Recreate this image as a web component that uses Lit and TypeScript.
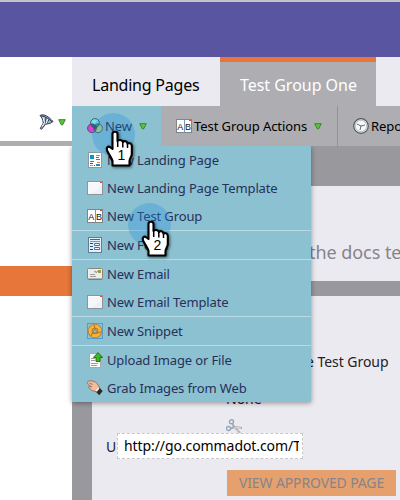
import { LitElement, html, css, svg } from "lit";
import { customElement } from "lit/decorators.js";

const icons: Record<string, unknown> = {
  page: svg`<rect x="1.5" y=".5" width="13" height="15" fill="#fff" stroke="#8b98a5"/><path d="M3 3h4v4H3z" fill="#168fc4"/><path d="M9 3.5h4M10 10.5h3M3 13.5h3" stroke="#d88a20"/><path d="M9 5.5h3M3 9.5h4" stroke="#4a8a3c"/><path d="M3 11.5h3M7 13.5h1" stroke="#555"/><path d="M9 7h4v1H9zM9 12h4v2H9z" fill="#2389bd"/>`,
  template: svg`<rect x=".5" y="1.5" width="15" height="13" fill="#f5f7fa" stroke="#8e9499"/><path d="M1 2.5h14" stroke="#fff"/><path d="M4 14 15 6v8z" fill="#edf1f5"/><path d="M13 2h2v1h-2z" fill="#e8472b"/>`,
  ab: svg`<rect x=".5" y="1.5" width="15" height="13" fill="#fff" stroke="#7d868d"/><path d="M8.500 2v12" stroke="#7a9bb8"/><path d="M13 2h2v1h-2z" fill="#e8472b"/><text x="1.3" y="11.5" font-size="9" fill="#111">A</text><text x="9.1" y="11.5" font-size="9" fill="#111">B</text>`,
  form: svg`<rect x="1.5" y=".5" width="13" height="15" fill="#e3f0fa" stroke="#5f7d96"/><path d="M3 2.500h10" stroke="#2b6cab"/><path d="M3 4.500h10" stroke="#6b9cc8"/><path d="M3 6.500h3M3 9.500h3M3 12.500h3" stroke="#3c4650"/><path d="M7.500 6.500h5v2h-5zM7.500 10.500h5v2h-5z" fill="#fff" stroke="#2c76bb"/>`,
  email: svg`<rect x=".5" y="2.500" width="15" height="11" rx="1" fill="#ededeb" stroke="#858883"/><path d="M1 13h14" stroke="#777"/><path d="M11 4h3v3h-3z" fill="#a59a3c"/><path d="m7 6 2-1v2l2-2M3 8.500h5M3 10.500h6" stroke="#888" fill="none" stroke-width=".8"/>`,
  snippet: svg`<rect x=".5" y=".5" width="15" height="15" fill="none" stroke="#2378b5" stroke-dasharray="1 1"/><circle cx="8" cy="8" r="4.800" fill="none" stroke="#b96c13" stroke-width="4.600"/><circle cx="8" cy="8" r="4.900" fill="none" stroke="#f7b23a" stroke-width="3.200"/><path d="M8 5.500 10.500 9.800h-5z" fill="#8bc1d0" stroke="#b96c13" stroke-width=".8"/><path d="m8 5.500-1-3.500M10.500 9.800l4-1M5.500 9.800 4 13" stroke="#b96c13"/>`,
  upload: svg`<path d="M2.500 1.500h8l3 3v11h-11z" fill="#fafafa" stroke="#a7aaa7"/><path d="M4 6.500h4M4 8.500h4M4 11.500h7M4 13.500h6" stroke="#9aa09c"/><path d="m11 .6 4.600 4.800H13V9.500H9V5.400H6.500z" fill="#42b51f" stroke="#176c0b" stroke-width=".9"/>`,
  grab: svg`<path d="M.6 1.800c1-1.200 3-1 4.500-.8 3 .3 5 2 6 4l2 3.500-3 3.500-3-1C5 11 3.500 10 3.500 9L2 8c-1-.8-.2-1.700.5-1.500l2 .3-2.700-1.900C.7 4 0 2.800.6 1.800z" fill="#f1bc9c" stroke="#96604a" stroke-width=".8"/><path d="m2 3 4 1.500" stroke="#9d6045" stroke-width=".7"/><path d="m9 11.800 3.500-3.800 3.200 3-3.500 4.200z" fill="#282828"/><path d="m8.800 10.700 2.400-3 1 1-2.400 3z" fill="#fff"/>`,
  rgb: svg`<circle cx="8" cy="5" r="4.300" fill="#73e5e8"/><circle cx="5" cy="10.300" r="4.300" fill="#e23be0"/><circle cx="11" cy="10.300" r="4.300" fill="#b5df6e"/><path d="M4 6.300A4.300 4.300 0 0 1 8 7.200 4.300 4.300 0 0 1 5 9.200z" fill="#3159d7"/><path d="M12 6.300A4.300 4.300 0 0 0 8 7.200 4.300 4.300 0 0 0 11 9.200z" fill="#24a54a"/><path d="M8 7.200a4.300 4.300 0 0 1 0 6.200 4.300 4.300 0 0 1 0-6.200z" fill="#c73737"/><path d="m8 6.800 2.400 2.600L8 11 5.700 9.400z" fill="#333b42"/><g fill="none" stroke="#444b55" stroke-width=".9"><circle cx="8" cy="5" r="4.400"/><circle cx="5" cy="10.300" r="4.400"/><circle cx="11" cy="10.300" r="4.400"/></g>`,
  clock: svg`<circle cx="8" cy="8" r="7.300" fill="#dfe2e3" stroke="#555b60" stroke-width="1.200"/><circle cx="8" cy="8" r="5.600" fill="#f8f9f9" stroke="#b6babd" stroke-width=".8"/><path d="M4 6l4 2 4-1M8 8l-1 4" stroke="#60676d" fill="none"/>`,
  funnel: svg`<path d="M1 1.500C5-.5 9.500 2.500 14 7.500c-1.500 1.500-4.500 2.500-7.500 2.700L2.500 15.300l-1.200-.8L4.300 9C4 6 3 3.500 1 1.500z" fill="#a9b6c8" stroke="#29384f"/><path d="M2 1.800c4 .5 8 3 11 6M7 4l-1 5M10 5.500 8 9" stroke="#2d3d57" fill="none"/><path d="M4 3.500 5.500 8.500 3 12.500M8.500 5l-1 4" stroke="#fff" fill="none"/>`,
  cut: svg`<circle cx="5.500" cy="2.800" r="2" fill="#eaf0f6" stroke="#92a5ba" stroke-width="1.400"/><circle cx="2.500" cy="9.500" r="2" fill="#eaf0f6" stroke="#92a5ba" stroke-width="1.400"/><path d="m6.500 5 1.500 3 6 6M4.500 9.500 9 8l7 1" stroke="#a7abb0" stroke-width="2" fill="none"/><path d="m8 8.500 5 5M9 8.300l6 .7" stroke="#eee" stroke-width=".8"/>`,
};

const icon = (name: string) => html`<svg class="icon" width="16" height="16" viewBox="0 0 16 16">${icons[name]}</svg>`;
const arrow = html`<svg class="arrow" width="8" height="7" viewBox="0 0 8 7"><path d="M.7.7h6.600L4.600 5.900H3.400z" fill="#5cc33b" stroke="#348a24"/></svg>`;

@customElement("app-pointer")
class AppPointer extends LitElement {
  static properties = { step: { type: String } };
  declare step: string;
  static styles = css`
    :host { display: block; width: 50px; height: 58px; pointer-events: none; }
    svg { display: block; overflow: visible; }
    .hand { filter: drop-shadow(1px 1px 1.5px rgba(0, 0, 0, .6)); }
    text { font: 14px "Liberation Sans", sans-serif; }
  `;
  render() {
    return html`<svg width="50" height="58" viewBox="0 0 50 58">
      <circle cx="21.500" cy="21.500" r="21.500" fill="#208fe4" fill-opacity=".3"/>
      <path class="hand" d="M20.500 36V21C20.500 18 25.500 18 25.500 21V28C26.500 26.500 30 26.500 31 29C32 27.500 35 28 35.500 30.500C37.500 29.500 39.800 30.500 39.800 33V41C39.800 44 37.500 45.500 37.500 48V52.500H20.500V48C20 45.500 17.500 42.500 15.300 38C13.800 34.500 16 32.500 18.500 34.500Z" fill="#fff" stroke="#000" stroke-width="2.100" stroke-linejoin="round"/>
      <path d="M25.700 27v7M30.800 29v5.500M35.500 30.500v4.500" stroke="#000" stroke-width="1.500"/>
      <text x="25.500" y="47">${this.step}</text>
    </svg>`;
  }
}

const groups = [
  [["page", "New Landing Page"], ["template", "New Landing Page Template"], ["ab", "New Test Group"]],
  [["form", "New Form"]],
  [["email", "New Email"], ["template", "New Email Template"]],
  [["snippet", "New Snippet"]],
  [["upload", "Upload Image or File"], ["grab", "Grab Images from Web"]],
];

@customElement("app-root")
class AppRoot extends LitElement {
  static styles = css`
    * { box-sizing: border-box; }
    :host { display: flex; flex-direction: column; position: relative; width: 400px; height: 500px; overflow: hidden; background: #fff; font: 13px "Noto Sans", sans-serif; color: #222; white-space: nowrap; }
    svg { display: block; flex: none; }
    .icon text { font-family: "Liberation Sans", sans-serif; letter-spacing: 0; }
    .header { height: 57px; flex: none; background: #5a55a0; border-top: 2px solid #c4c4c8; }
    .body { display: flex; flex: 1; min-height: 0; }
    .side { width: 72px; flex: none; display: flex; flex-direction: column; }
    .filter { height: 89px; border-bottom: 5px solid #aeadb2; display: flex; align-items: flex-end; padding: 0 7px 11px 39px; gap: 3px; }
    .filter .arrow { margin-bottom: 4px; }
    .selected { height: 30px; margin-top: 120px; background: #e6763a; }
    .main { flex: 1; min-width: 0; display: flex; flex-direction: column; background: #99989d; }
    .tabs { height: 49px; flex: none; display: flex; background: #ebeaf1; font-size: 16px; line-height: 22px; }
    .tab { width: 148px; padding: 17px 0 0 20px; color: #000; letter-spacing: -.22px; }
    .tab.active { width: 156px; padding-top: 12px; background: #aeadb2; color: #fff; border-top: 5px solid #e6763a; letter-spacing: -.03px; }
    .toolbar { height: 40px; flex: none; display: flex; background: #aeadb2; color: #000; overflow: hidden; letter-spacing: -.08px; }
    .tool { display: flex; align-items: center; flex: none; padding-left: 15px; gap: 2px; }
    .tool .arrow { margin-left: 5px; }
    .tool.new { width: 89px; background: #8bc1d0; color: #1d2c40; }
    .tool.actions { width: 177px; border-right: 1px solid #949398; }
    .intro { margin: 40px 0 15px 20px; height: 95px; flex: none; background: #ebeaf1; color: #858489; font-size: 18px; line-height: 26px; padding: 53px 0 0 217px; letter-spacing: -.05px; }
    .details { margin-left: 20px; flex: 1; min-height: 0; background: #ebeaf1; display: flex; flex-direction: column; font-size: 14px; }
    .kind { margin-top: 56px; padding-left: 214px; line-height: 20px; letter-spacing: -.05px; }
    .none { margin-top: 17px; padding-left: 134px; line-height: 20px; }
    .cut { margin: 10px 0 0 134px; }
    .url { display: flex; align-items: center; padding-left: 14px; height: 26px; margin-top: -2px; }
    .label { width: 11px; }
    .field { width: 186px; height: 26px; padding: 2px 3px 0 6px; border: 1px dashed #c8c8ca; background: #fff; color: #000; line-height: 20px; }
    .clip { overflow: hidden; letter-spacing: -.08px; }
    .button { width: 169px; height: 26px; margin: 11px 0 0 135px; background: #e6a06e; color: #85858a; line-height: 26px; text-align: center; letter-spacing: -.13px; }
    .menu { position: absolute; left: 72px; top: 146px; width: 239px; background: #8bc1d0; color: #28305a; box-shadow: 0 1px 5px rgba(0, 0, 0, .4); clip-path: inset(0 -8px -8px -8px); letter-spacing: -.13px; }
    .group + .group { border-top: 1px solid #b9dbe4; }
    .item { height: 28px; display: flex; align-items: center; gap: 4px; padding-left: 15px; }
    .first, .second { position: absolute; }
    .first { left: 92px; top: 113px; }
    .second { left: 128px; top: 203px; }
  `;
  render() {
    return html`
      <div class="header"></div>
      <div class="body">
        <div class="side">
          <div class="filter">${icon("funnel")}${arrow}</div>
          <div class="selected"></div>
        </div>
        <div class="main">
          <div class="tabs"><div class="tab">Landing Pages</div><div class="tab active">Test Group One</div></div>
          <div class="toolbar">
            <div class="tool new">${icon("rgb")}<span>New</span>${arrow}</div>
            <div class="tool actions">${icon("ab")}<span>Test Group Actions</span>${arrow}</div>
            <div class="tool">${icon("clock")}<span>Reports</span></div>
          </div>
          <div class="intro">the docs te</div>
          <div class="details">
            <div class="kind">e Test Group</div>
            <div class="none">None</div>
            <div class="cut">${icon("cut")}</div>
            <div class="url"><span class="label">U</span><div class="field"><div class="clip">http://go.commadot.com/T</div></div></div>
            <div class="button">VIEW APPROVED PAGE</div>
          </div>
        </div>
      </div>
      <div class="menu">${groups.map((g) => html`<div class="group">${g.map(([i, label]) => html`<div class="item">${icon(i)}<span>${label}</span></div>`)}</div>`)}</div>
      <app-pointer class="first" step="1"></app-pointer>
      <app-pointer class="second" step="2"></app-pointer>
    `;
  }
}
